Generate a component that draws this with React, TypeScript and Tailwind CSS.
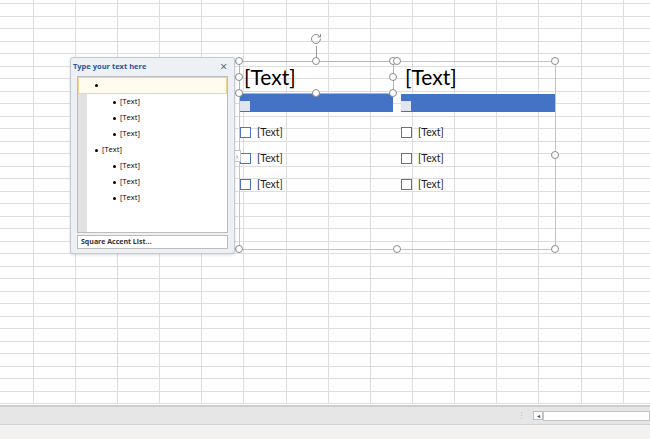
import { RotateCw } from "lucide-react";

const COLS = 16;
const ROWS = 33;

const paneFont = { fontFamily: '"Open Sans", "Noto Sans", sans-serif' };
const artFont = { fontFamily: 'Lato, "Liberation Sans", sans-serif' };

function Handle({ x, y }: { x: number; y: number }) {
  return (
    <div
      className="absolute w-[8px] h-[8px] rounded-full bg-white border border-[#8c8c8c]"
      style={{ left: x - 4, top: y - 4 }}
    />
  );
}

function Column({ width }: { width: string }) {
  return (
    <div className={`${width} flex flex-col`}>
      <div className="h-[32px] flex items-center pl-[4px] pb-[4px] text-[21px] leading-none text-black">
        [Text]
      </div>
      <div className="h-[18px] bg-[#4472c4] flex items-end pb-[1px]">
        <div className="w-[10px] h-[10px] bg-[#dfe5f1]" />
      </div>
      <div className="flex flex-col gap-[15px] pt-[15px]">
        {[0, 1, 2].map((i) => (
          <div key={i} className="h-[11px] flex items-center gap-[6px]">
            <div className="w-[11px] h-[11px] border-[1.5px] border-[#4a74c9] bg-white shrink-0" />
            <span className="text-[10.5px] text-[#1a1a1a]">[Text]</span>
          </div>
        ))}
      </div>
    </div>
  );
}

function Pane() {
  const rows = [
    { lvl: 2, text: "[Text]" },
    { lvl: 2, text: "[Text]" },
    { lvl: 2, text: "[Text]" },
    { lvl: 1, text: "[Text]" },
    { lvl: 2, text: "[Text]" },
    { lvl: 2, text: "[Text]" },
    { lvl: 2, text: "[Text]" },
  ];
  return (
    <div
      className="absolute left-[70px] top-[57px] w-[165px] h-[197px] rounded-[3px] border border-[#c3c8d2] bg-[#edf0f5] shadow-[0_1px_3px_rgba(0,0,0,0.15)] flex flex-col"
      style={paneFont}
    >
      <div className="h-[18px] flex items-center justify-between px-[2px] pr-[7px]">
        <span className="text-[7.5px] font-bold text-[#2a5699]">Type your text here</span>
        <span className="text-[12px] leading-none text-[#555]">×</span>
      </div>
      <div className="mx-[6px] h-[157px] bg-white border border-[#bcbcbc] flex flex-col">
        <div className="h-[17px] bg-[#fffbef] border border-[#f2d690] flex items-center pl-[16px]">
          <span className="w-[3px] h-[3px] rounded-full bg-black" />
        </div>
        <div className="flex flex-1">
          <div className="w-[9px] bg-[#e2e2e2]" />
          <div className="flex flex-col">
            {rows.map((r, i) => (
              <div
                key={i}
                className={`h-[16px] flex items-center gap-[4px] ${r.lvl === 2 ? "pl-[26px]" : "pl-[8px]"}`}
              >
                <span className="w-[3px] h-[3px] rounded-full bg-black" />
                <span className="text-[7.5px] text-black">{r.text}</span>
              </div>
            ))}
          </div>
        </div>
      </div>
      <div className="mx-[6px] mt-[2px] h-[14px] bg-white border border-[#bcbcbc] flex items-center pl-[3px]">
        <span className="text-[7px] font-bold text-[#333]">Square Accent List...</span>
      </div>
    </div>
  );
}

export default function App() {
  return (
    <div className="w-[650px] h-[439px] flex flex-col bg-white overflow-hidden relative">
      <div className="h-[405px] overflow-hidden">
        <div
          className="grid -mt-[8.2px] -ml-[8.6px]"
          style={{ gridTemplateColumns: `repeat(${COLS}, 42.17px)` }}
        >
          {Array.from({ length: COLS * ROWS }).map((_, i) => (
            <div key={i} className="h-[12.5px] border-r border-b border-[#dedede]" />
          ))}
        </div>
      </div>
      <div className="h-[20px] bg-[#e6e6e6] border-t-2 border-[#cdcdcd] border-b border-b-[#d2d2d2] flex items-center">
        <div className="flex-1" />
        <span className="text-[9px] text-[#bdbdbd] leading-none mr-[7px]">⋮</span>
        <div className="w-[10px] h-[9px] bg-white border border-[#bdbdbd] flex items-center justify-center text-[6px] leading-none text-[#444]">
          ◂
        </div>
        <div className="w-[107px] h-[10px] bg-white border border-[#c6c6c6]" />
      </div>
      <div className="flex-1 bg-[#f3f2f1]" />

      {/* SmartArt */}
      <div className="absolute left-[239px] top-[61px] w-[317px] h-[189px] border border-[#c4c4c4] flex gap-[8px]" style={artFont}>
        <Column width="w-[153px]" />
        <Column width="w-[154px]" />
      </div>
      <div className="absolute left-[239px] top-[61px] w-[155px] h-[33px] border border-[#b5b5b5]" />
      <div className="absolute left-[316px] top-[46px] w-px h-[15px] bg-[#9a9a9a]" />
      <RotateCw className="absolute left-[310px] top-[33px] text-[#8c8c8c]" size={12} strokeWidth={2} />
      {[
        [239, 61], [316, 61], [393, 61], [239, 77], [393, 77], [239, 93], [316, 93], [393, 93],
        [397, 61], [555, 61], [555, 155], [555, 249], [397, 249], [239, 249],
      ].map(([x, y], i) => (
        <Handle key={i} x={x} y={y} />
      ))}
      <div className="absolute left-[233px] top-[150px] w-[8px] h-[12px] bg-white border border-[#c6c6c6] flex items-center justify-center text-[7px] leading-none text-[#777]">
        ›
      </div>

      <Pane />
    </div>
  );
}
